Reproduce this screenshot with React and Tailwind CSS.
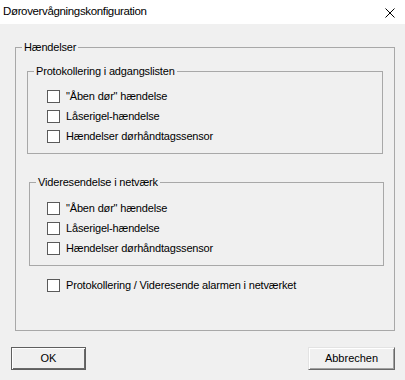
import React from 'react';

const sans = { fontFamily: '"Liberation Sans", Arial, sans-serif' };

const Checkbox = ({ label }) => (
    <label className="flex items-center h-[13px] gap-[6px] text-[11px] leading-[13px] tracking-[-0.17px] text-black">
        <span className="w-[13px] h-[13px] shrink-0 border border-[#5a5a5a] bg-white" />
        <span>{label}</span>
    </label>
);

const Group = ({ title, className, children }) => (
    <fieldset className={`border border-[#a8a8a8] ${className}`}>
        <legend className="ml-[6px] px-[2px] text-[11px] leading-[13px] tracking-[-0.17px] text-black">{title}</legend>
        {children}
    </fieldset>
);

const events = ['"Åben dør" hændelse', 'Låserigel-hændelse', 'Hændelser dørhåndtagssensor'];

export default function App() {
    return (
        <div className="w-[405px] h-[380px] bg-[#f0f0f0] flex flex-col overflow-hidden" style={sans}>
            {/* Titellinje */}
            <div className="h-[24px] bg-white flex items-center justify-between pl-[3px] pr-[10px]">
                <span className="text-[11.5px] tracking-[-0.35px] text-black">
                    Dørovervågningskonfiguration
                </span>
                <svg width="10" height="10" viewBox="0 0 10 10" className="mt-[2px]">
                    <path d="M0.5 0.5 L9.5 9.5 M9.5 0.5 L0.5 9.5" stroke="#000" strokeWidth="1" fill="none" />
                </svg>
            </div>

            <div className="pl-[15px] pt-[17px]">
                <Group title="Hændelser" className="w-[380px] pt-[11px] pb-[38px]">
                    <Group title="Protokollering i adgangslisten" className="ml-[11px] w-[356px] pt-[12px] pb-[10px]">
                        <div className="flex flex-col gap-[7px] pl-[19px]">
                            {events.map((e) => <Checkbox key={e} label={e} />)}
                        </div>
                    </Group>

                    <Group title="Videresendelse i netværk" className="ml-[13px] mt-[22px] w-[355px] pt-[13px] pb-[10px]">
                        <div className="flex flex-col gap-[7px] pl-[17px]">
                            {events.map((e) => <Checkbox key={e} label={e} />)}
                        </div>
                    </Group>

                    <div className="mt-[13px] pl-[31px]">
                        <Checkbox label="Protokollering / Videresende alarmen i netværket" />
                    </div>
                </Group>
            </div>

            {/* Knapper */}
            <div className="flex justify-between pl-[11px] pr-[10px] mt-[16px]">
                <button className="w-[75px] h-[23px] border border-[#5f5f5f] bg-[#f0f0f0] text-[11px] text-black shadow-[inset_1px_1px_0_#fff,inset_-1px_-1px_0_#696969]">
                    OK
                </button>
                <button className="w-[87px] h-[23px] border border-t-[#e3e3e3] border-l-[#e3e3e3] border-r-[#696969] border-b-[#696969] bg-[#f0f0f0] text-[11px] text-black shadow-[inset_1px_1px_0_#fff,inset_-1px_-1px_0_#a0a0a0]">
                    Abbrechen
                </button>
            </div>
        </div>
    );
}
